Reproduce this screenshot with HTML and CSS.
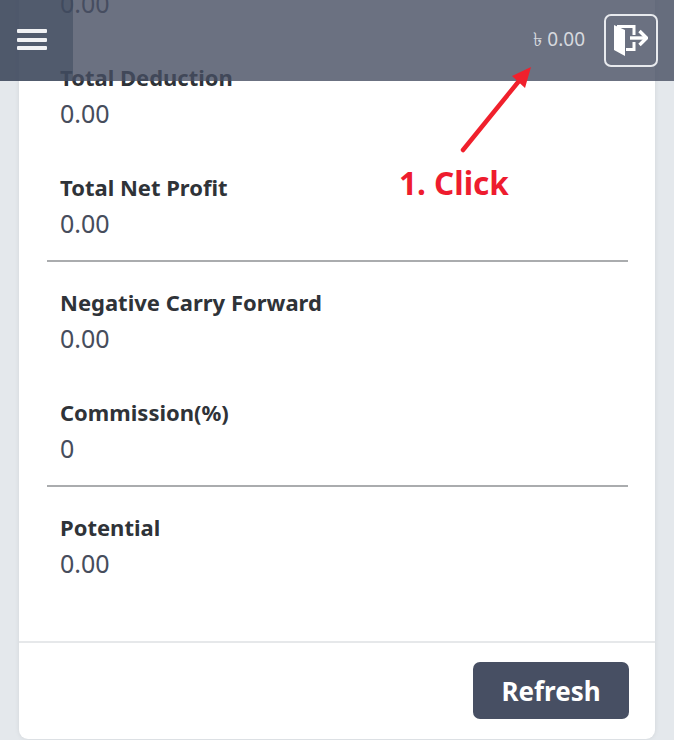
FILE: index.html
```html
<!DOCTYPE html>
<html lang="en">
<head>
  <meta charset="UTF-8" />
  <title>Profit Summary</title>
  <link rel="stylesheet" href="styles.css">
</head>
<body>
  <div class="card">
    <div class="card-body">
      <div class="stat"><div class="stat-value">0.00</div></div>
      <div class="stat"><div class="stat-label">Total Deduction</div><div class="stat-value">0.00</div></div>
      <div class="stat stat-end"><div class="stat-label">Total Net Profit</div><div class="stat-value">0.00</div></div>
      <hr class="divider">
      <div class="stat"><div class="stat-label">Negative Carry Forward</div><div class="stat-value">0.00</div></div>
      <div class="stat stat-end"><div class="stat-label">Commission(%)</div><div class="stat-value">0</div></div>
      <hr class="divider">
      <div class="stat"><div class="stat-label">Potential</div><div class="stat-value">0.00</div></div>
    </div>
    <div class="card-footer">
      <button type="button" class="btn-refresh">Refresh</button>
    </div>
  </div>

  <header class="topbar">
    <div class="menu-btn">
      <span class="menu-line"></span>
      <span class="menu-line"></span>
      <span class="menu-line"></span>
    </div>
    <div class="topbar-right">
      <span class="balance">৳ 0.00</span>
      <div class="logout-btn">
        <svg width="34" height="32" viewBox="0 0 34 32">
          <path d="M0 0 L11 5 V31 L0 25 Z" fill="#fff"/>
          <path d="M3 1.5 H20 V10 M12 24.5 H20 V17" fill="none" stroke="#fff" stroke-width="3"/>
          <path d="M16 13 H31" fill="none" stroke="#fff" stroke-width="3.4"/>
          <path d="M25.5 6 L32.5 13 L25.5 20" fill="none" stroke="#fff" stroke-width="3.4"/>
        </svg>
      </div>
    </div>
  </header>

  <!-- annotation drawn on top of the screenshot -->
  <svg class="note-arrow" width="90" height="90" viewBox="0 0 90 90">
    <path d="M13 84 L69 15" stroke="#f0202c" stroke-width="4.5" stroke-linecap="round" fill="none"/>
    <path d="M81 1 L62 10 L75 22 Z" fill="#f0202c"/>
  </svg>
  <div class="note-text">1. Click</div>
</body>
</html>
```

FILE: styles.css
```css
body {
  margin: 0;
  padding: 0;
  height: 740px;
  overflow: hidden;
  position: relative;
  font-family: "Noto Sans", "Open Sans", sans-serif;
  background-color: #e4e8ec;
  display: flex;
  flex-direction: column;
  justify-content: flex-end;
  align-items: flex-start;
}
.card {
  flex-shrink: 0;
  box-sizing: border-box;
  width: 636px;
  margin: 0 0 1px 19px;
  background-color: #fff;
  border-radius: 0 0 9px 9px;
  box-shadow: 0 0 5px rgba(0, 0, 0, 0.08);
}
.card-body {
  padding: 0 27px 22px 28px;
}
.stat {
  padding: 0 13px;
  margin-bottom: 38px;
}
.stat-end {
  margin-bottom: 19px;
}
.stat-label {
  font-size: 22px;
  line-height: 36px;
  font-weight: 700;
  color: #2f3338;
}
.stat-value {
  font-size: 25px;
  line-height: 36px;
  color: #464d5c;
}
.divider {
  margin: 0 0 22px;
  border: none;
  border-top: 2px solid #aaacae;
}
.card-footer {
  display: flex;
  justify-content: flex-end;
  padding: 19px 26px 20px;
  border-top: 2px solid #e6e8ea;
}
.btn-refresh {
  width: 156px;
  height: 57px;
  border: none;
  border-radius: 7px;
  background-color: #474f63;
  color: #fff;
  font-family: "Noto Sans", "Open Sans", sans-serif;
  font-size: 26px;
  font-weight: 700;
}
/* ----- top bar sits over the scrolled card ----- */
.topbar {
  box-sizing: border-box;
  position: absolute;
  top: 0;
  left: 0;
  right: 0;
  height: 81px;
  display: flex;
  justify-content: space-between;
  align-items: center;
  background-color: rgba(70, 78, 97, 0.8);
}
.menu-btn {
  box-sizing: border-box;
  width: 73px;
  height: 81px;
  padding: 0 9px 2px 0;
  display: flex;
  flex-direction: column;
  justify-content: center;
  align-items: center;
  gap: 4.5px;
  background-color: rgba(60, 72, 92, 0.55);
}
.menu-line {
  width: 30px;
  height: 4px;
  background-color: #f1f2f4;
  border-radius: 1px;
}
.topbar-right {
  display: flex;
  align-items: center;
  gap: 19px;
  padding-right: 16px;
}
.balance {
  font-size: 19px;
  color: #d6d9de;
}
.logout-btn {
  box-sizing: border-box;
  width: 54px;
  height: 53px;
  display: flex;
  justify-content: center;
  align-items: center;
  border: 2px solid #e8eaee;
  border-radius: 7px;
}
/* ----- annotation ----- */
.note-arrow {
  position: absolute;
  left: 450px;
  top: 66px;
}
.note-text {
  position: absolute;
  left: 399px;
  top: 163px;
  font-size: 31.5px;
  line-height: 40px;
  font-weight: 700;
  color: #ee1c2e;
}
```
